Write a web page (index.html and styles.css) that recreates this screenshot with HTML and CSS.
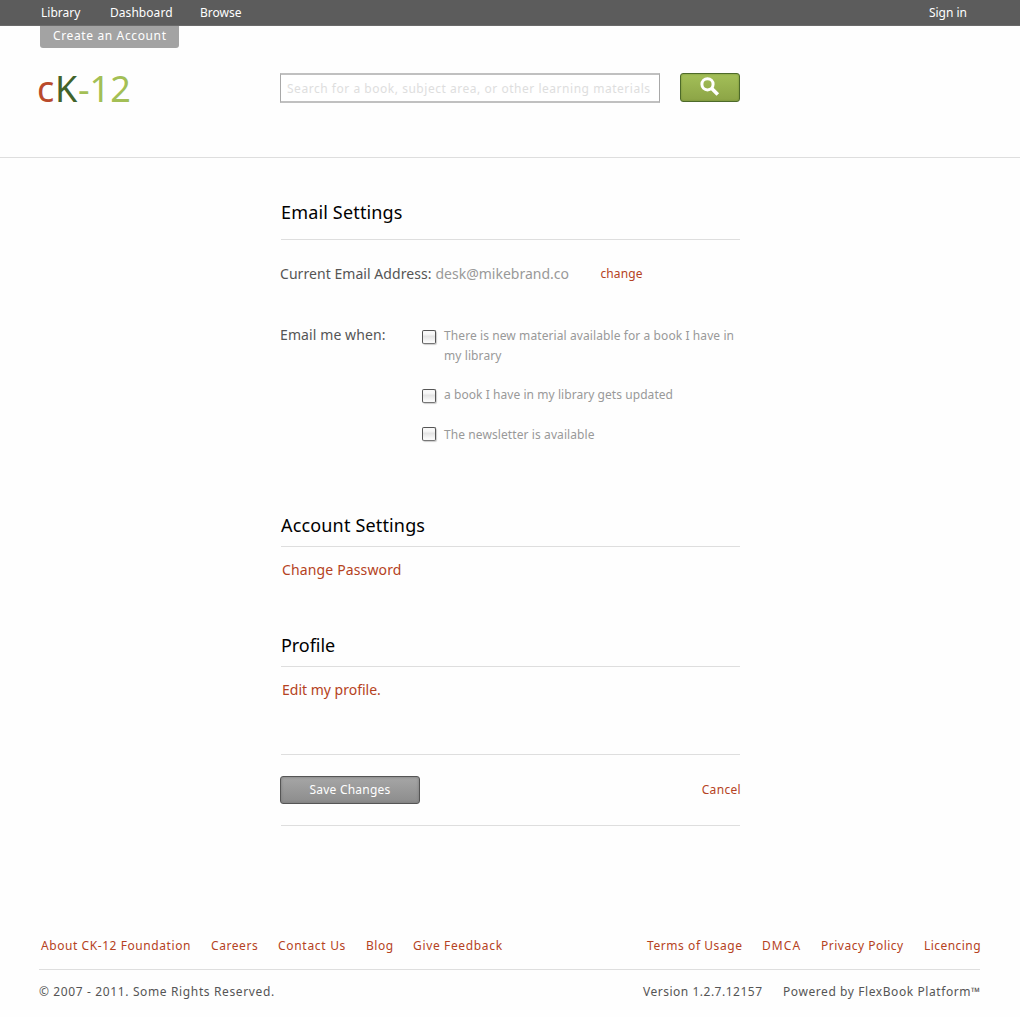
FILE: index.html
```html
<!DOCTYPE html>
<html lang="en">
<head>
<meta charset="utf-8">
<title>CK-12 Email Settings</title>
<link rel="stylesheet" href="styles.css">
</head>
<body>
<nav class="topbar">
  <a class="nav-library">Library</a>
  <a class="nav-dashboard">Dashboard</a>
  <a>Browse</a>
  <a class="nav-signin">Sign in</a>
</nav>
<header class="header">
  <a class="create">Create an Account</a>
  <div class="brandrow">
    <div class="logo"><span class="logo-c">c</span><span class="logo-k">K</span><span class="logo-n">-12</span></div>
    <div class="search">Search for a book, subject area, or other learning materials</div>
    <button class="search-btn" aria-label="Search">
      <svg width="20" height="20" viewBox="0 0 20 20"><circle cx="7.5" cy="7.3" r="5.6" fill="none" stroke="#fff" stroke-width="3"/><path d="M11.8 11.6L17.8 17.6" stroke="#fff" stroke-width="3.6"/></svg>
    </button>
  </div>
</header>
<main class="main">
  <section class="email">
    <h2 class="title title-email">Email Settings</h2>
    <div class="address"><span class="label">Current Email Address:</span><span class="value">desk@mikebrand.co</span><a class="link change">change</a></div>
    <div class="notify">
      <div class="label label-when">Email me when:</div>
      <ul class="options">
        <li class="option"><i class="box"></i><span>There is new material available for a book I have in<br>my library</span></li>
        <li class="option"><i class="box"></i><span class="opt-book">a book I have in my library gets updated</span></li>
        <li class="option option-news"><i class="box"></i><span>The newsletter is available</span></li>
      </ul>
    </div>
  </section>
  <section class="account">
    <h2 class="title">Account Settings</h2>
    <a class="link big pass">Change Password</a>
  </section>
  <section class="profile">
    <h2 class="title title-profile">Profile</h2>
    <a class="link big">Edit my profile.</a>
  </section>
  <div class="actions">
    <button class="save">Save Changes</button>
    <a class="link cancel">Cancel</a>
  </div>
</main>
<footer class="footer">
  <div class="links">
    <a class="f-about">About CK-12 Foundation</a><a class="f-careers">Careers</a><a class="f-contact">Contact Us</a><a class="f-blog">Blog</a><a class="f-feedback">Give Feedback</a>
    <a class="f-terms">Terms of Usage</a><a class="f-dmca">DMCA</a><a class="f-privacy">Privacy Policy</a><a class="f-lic">Licencing</a>
  </div>
  <div class="legal"><span class="copy">© 2007 - 2011. Some Rights Reserved.</span><span class="version">Version 1.2.7.12157</span><span class="powered">Powered by FlexBook Platform™</span></div>
</footer>
</body>
</html>
```
FILE: styles.css
```css
* { box-sizing: border-box; }
body { margin: 0; background: #fefefe; font: 12px/20px "Noto Sans", sans-serif; color: #555; }
h2, ul { margin: 0; padding: 0; font-weight: 400; list-style: none; }
a, span { white-space: nowrap; }
button { padding: 0; font: inherit; }

.topbar { display: flex; height: 26px; padding: 0 53px 0 41px; background: #5c5c5c; border-bottom: 1px solid #6a6a6a; color: #fff; line-height: 25px; }
.nav-library { width: 69px; }
.nav-dashboard { width: 90px; letter-spacing: .05px; }
.nav-signin { margin-left: auto; }

.header { height: 132px; border-bottom: 1px solid #dedede; }
.create { display: block; width: 139px; height: 22px; margin-left: 40px; padding-left: 13px; border-radius: 0 0 3px 3px; background: #a3a3a3; color: #fff; line-height: 20px; letter-spacing: .63px; }
.brandrow { display: flex; padding: 25px 0 0 37px; }
.logo { display: flex; width: 243px; font-size: 36px; line-height: 32px; }
.logo-c { width: 18px; color: #b94a2b; }
.logo-k { width: 23px; color: #41632b; }
.logo-n { color: #a3bf55; }
.search { width: 380px; height: 30px; padding-left: 6px; border: 1px solid #a8a8a8; border-top: 2px solid #c0c0c0; border-bottom: 2px solid #c0c0c0; background: #fff; color: #dedede; line-height: 28px; letter-spacing: .53px; white-space: nowrap; }
.search-btn { display: flex; justify-content: center; width: 60px; height: 29px; margin-left: 20px; padding-top: 3px; border: 1px solid #4d6a2a; border-radius: 3px; background: linear-gradient(#a3bf58, #8ca446); box-shadow: inset 0 0 2px #6f8a35; }

.main { width: 460px; margin: 42px 0 0 280px; }
.title { margin-left: 1px; padding-bottom: 9px; border-bottom: 1px solid #dedede; color: #000; font-size: 18px; line-height: 24px; letter-spacing: .16px; }
.title-email { padding-bottom: 15px; }
.title-profile { letter-spacing: -.05px; }
.label { color: #555; font-size: 14px; letter-spacing: .05px; }
.address { display: flex; margin-top: 24px; }
.value { width: 134px; margin-left: 4px; color: #999; font-size: 14px; }
.link { color: #b54222; }
.change { margin-left: 31px; letter-spacing: .11px; }
.notify { display: flex; margin-top: 41px; }
.label-when { width: 142px; letter-spacing: .1px; }
.options { color: #999; letter-spacing: .09px; }
.option { display: flex; margin-bottom: 18px; }
.option span { padding-top: 1px; }
.opt-book { letter-spacing: .06px; }
.option-news { margin-top: 19px; }
.option-news .box { margin-top: 3px; }
.box { width: 14px; height: 14px; margin: 5px 8px 0 0; border: 1px solid #555; border-bottom-color: #777; border-radius: 2px; background: linear-gradient(#f8f8f8 25%, #e4e4e4 45%, #fafafa 90%); box-shadow: 1px 1px 1px #ccc; }
.account { margin-top: 50px; }
.big { display: block; margin: 13px 0 0 2px; font-size: 14px; }
.pass { letter-spacing: .14px; }
.profile { margin-top: 53px; }
.actions { display: flex; align-items: center; justify-content: space-between; height: 72px; margin-top: 54px; background: linear-gradient(#dedede, #dedede) 1px 0/459px 1px no-repeat, linear-gradient(#dedede, #dedede) 1px 71px/459px 1px no-repeat; }
.save { width: 140px; height: 28px; border: 1px solid #555; border-radius: 3px; background: linear-gradient(#a6a6a6, #8c8c8c); box-shadow: inset 0 0 3px #777; color: #fff; line-height: 24px; letter-spacing: .24px; }
.cancel { margin-right: -1px; letter-spacing: .33px; }

.footer { width: 941px; margin: 109px 0 0 39px; letter-spacing: .57px; }
.links { display: flex; height: 35px; padding: 1px 0 0 2px; border-bottom: 1px solid #dedede; color: #b54222; }
.f-about { width: 170px; }
.f-careers { width: 67px; }
.f-contact { width: 88px; letter-spacing: .7px; }
.f-blog { width: 47px; }
.f-feedback { letter-spacing: .65px; }
.f-terms { width: 115px; margin-left: auto; }
.f-dmca { width: 59px; letter-spacing: 1.1px; }
.f-privacy { width: 103px; letter-spacing: .5px; }
.f-lic { width: 56px; letter-spacing: .45px; }
.legal { display: flex; padding-top: 12px; }
.copy { letter-spacing: .63px; }
.version { width: 140px; margin-left: auto; letter-spacing: .51px; }
.powered { width: 197px; letter-spacing: .58px; }
```
